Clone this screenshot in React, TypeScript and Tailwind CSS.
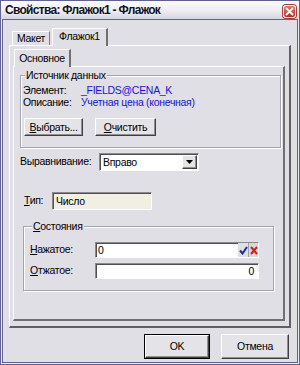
import { useState } from "react";

const raised =
  "border border-t-white border-l-white border-r-[#404040] border-b-[#404040] shadow-[inset_-1px_-1px_0_#909090]";
const sunken =
  "border border-t-[#8a8a8a] border-l-[#8a8a8a] border-r-white border-b-white shadow-[inset_1px_1px_0_#505050]";

function GroupBox({ title, className, children }: { title: React.ReactNode; className: string; children: React.ReactNode }) {
  return (
    <fieldset className={"border border-[#a4a4ac] shadow-[inset_1px_1px_0_#ffffff,1px_1px_0_#ffffff] " + className}>
      <legend className="ml-[2px] px-px bg-[#e0dfe5] leading-[12px]">{title}</legend>
      {children}
    </fieldset>
  );
}

function App() {
  const [align] = useState("Вправо");

  return (
    <div className="w-[300px] h-[365px] flex flex-col border border-[#626290] bg-[#ececf2] font-['Liberation_Sans',sans-serif] text-[10.5px] tracking-[-0.3px] text-black">
      <div className="h-[18px] shrink-0 flex items-center justify-between pl-[4px] pr-[3px] bg-gradient-to-b from-[#fdfdfe] via-[#eeeef3] to-[#d6d6e0]">
        <span className="text-[12px] font-bold tracking-[-0.7px] text-[#101020] [text-shadow:0_0_2px_#ffffff]">Свойства: Флажок1 - Флажок</span>
        <div className="w-[13px] h-[13px] mt-[3px] rounded-[3px] border border-white bg-gradient-to-b from-[#e87a60] to-[#c02818] flex items-center justify-center shadow-[0_0_0_1px_#a04040]">
          <svg width="9" height="9" viewBox="0 0 9 9">
            <path d="M1.5 1.5 L7.5 7.5 M7.5 1.5 L1.5 7.5" stroke="#ffffff" strokeWidth="1.8" strokeLinecap="round" />
          </svg>
        </div>
      </div>

      <div className="flex-1 flex flex-col mx-px mb-px border border-[#626290] bg-[#e0dfe5]">
        {/* top tabs */}
        <div className="flex items-end h-[25px] pl-[8px] pt-[7px]">
          <div className="h-[14px] w-[38px] ml-[1px] flex items-center justify-center border-t border-l border-white border-r border-r-[#808080] leading-none">
            Макет
          </div>
          <div className="h-[18px] w-[56px] ml-[2px] pb-[3px] flex items-center justify-center border-t border-l border-white border-r-2 border-r-[#707070] bg-[#e0dfe5] leading-none -mb-px relative">
            Флажок1
          </div>
        </div>

        {/* outer tab page */}
        <div className="mx-[6px] h-[283px] border-t border-l border-white border-r-2 border-b-2 border-r-[#606060] border-b-[#606060] pl-[4px] pt-[3px]">
          <div className="h-[18px] w-[57px] flex items-center justify-center border-t border-l border-white border-r-2 border-r-[#707070] relative -mb-px bg-[#e0dfe5] leading-none pb-[1px]">
            Основное
          </div>
          <div className="w-[272px] h-[255px] ml-[-1px] border-t border-l border-white border-r-2 border-b-2 border-r-[#707070] border-b-[#707070] flex flex-col">
            <GroupBox title="Источник данных" className="ml-[6px] mt-[2px] w-[261px] h-[79px] pl-[2px]">
              <div className="mt-[3px] leading-[12px]">
                <div className="flex">
                  <span className="w-[58px]">Элемент:</span>
                  <span className="text-[#1414e8]">_FIELDS@CENA_K</span>
                </div>
                <div className="flex">
                  <span className="w-[58px]">Описание:</span>
                  <span className="text-[#1414e8]">Учетная цена (конечная)</span>
                </div>
              </div>
              <div className="flex gap-[12px] mt-[10px] ml-[1px]">
                <button className={"w-[59px] h-[18px] bg-[#e4e4e8] leading-none " + raised}>
                  <u>В</u>ыбрать...
                </button>
                <button className={"w-[61px] h-[18px] bg-[#e4e4e8] leading-none " + raised}>
                  <u>О</u>чистить
                </button>
              </div>
            </GroupBox>

            <div className="flex items-center mt-[5px] ml-[6px]">
              <span className="w-[79px]">Выравнивание:</span>
              <div className={"w-[100px] h-[18px] bg-white flex items-center " + sunken}>
                <span className="flex-1 pl-[3px] leading-none">{align}</span>
                <div className={"w-[15px] h-[14px] mr-px bg-[#e4e4e8] flex items-center justify-center " + raised}>
                  <svg width="7" height="4" viewBox="0 0 7 4">
                    <path d="M0 0 H7 L3.5 4 Z" fill="#000" />
                  </svg>
                </div>
              </div>
            </div>

            <div className="flex items-center mt-[21px] ml-[10px]">
              <span className="w-[28px]">
                <u>Т</u>ип:
              </span>
              <div className={"w-[100px] h-[18px] bg-[#f1efe2] pl-[3px] flex items-center leading-none " + sunken}>Число</div>
            </div>

            <GroupBox title={<><u>С</u>остояния</>} className="ml-[9px] mt-[10px] w-[251px] h-[71px] pl-[6px]">
              <div className="flex items-center mt-[10px]">
                <span className="w-[65px]">
                  <u>Н</u>ажатое:
                </span>
                <div className={"w-[164px] h-[16px] bg-white flex items-center " + sunken}>
                  <span className="flex-1 pl-[2px] leading-none">0</span>
                  <div className="w-[10px] h-[14px] bg-[#e0dfe5] flex items-center justify-center">
                    <svg width="9" height="9" viewBox="0 0 9 9">
                      <path d="M1 4.5 L3.5 7.5 L8 1" stroke="#1830a0" strokeWidth="2" fill="none" />
                    </svg>
                  </div>
                  <div className="w-[10px] h-[14px] bg-[#d8d8dc] border-l border-[#a0a0a0] flex items-center justify-center">
                    <svg width="8" height="9" viewBox="0 0 8 9">
                      <path d="M1 1 L7 8 M7 1 L1 8" stroke="#e01818" strokeWidth="2" />
                    </svg>
                  </div>
                </div>
              </div>
              <div className="flex items-center mt-[5px]">
                <span className="w-[65px]">
                  <u>О</u>тжатое:
                </span>
                <div className={"w-[164px] h-[16px] bg-white flex items-center justify-end pr-[4px] leading-none " + sunken}>0</div>
              </div>
            </GroupBox>
          </div>
        </div>

        {/* dialog buttons */}
        <div className="flex justify-end gap-[11px] mt-[6px] pr-[8px]">
          <button className="w-[66px] h-[25px] border border-black bg-[#e4e4e8] p-0">
            <div className={"w-full h-full flex items-center justify-center leading-none " + raised}>OK</div>
          </button>
          <button className={"w-[68px] h-[25px] bg-[#e4e4e8] leading-none " + raised}>Отмена</button>
        </div>
      </div>
    </div>
  );
}

export default App;
